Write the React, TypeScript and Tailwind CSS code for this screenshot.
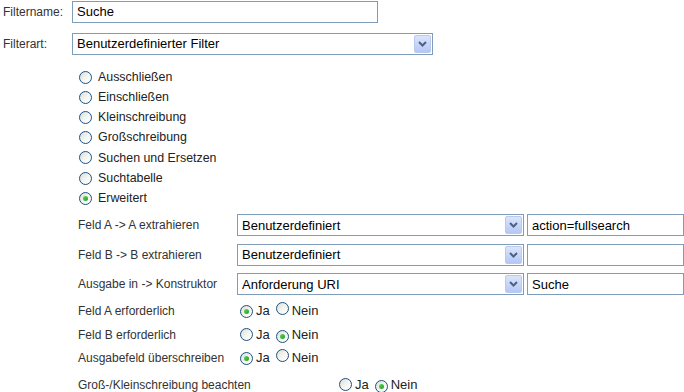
import React from "react";

const font = { fontFamily: '"Liberation Sans", Arial, sans-serif' };

function Radio({ checked }: { checked?: boolean }) {
  return (
    <span className="relative inline-flex h-[13px] w-[13px] shrink-0 items-center justify-center rounded-full border border-[#1c5180] bg-gradient-to-br from-[#dcdcd7] via-[#f4f4f0] to-white">
      {checked && (
        <span className="h-[5px] w-[5px] rounded-full bg-gradient-to-br from-[#5cd85c] to-[#1f9d1f]" />
      )}
    </span>
  );
}

function Chevron() {
  return (
    <span className="flex h-[18px] w-[17px] items-center justify-center rounded-[2px] border border-[#b9c9ef] bg-gradient-to-b from-[#dbe5fb] to-[#b4c8f6]">
      <svg width="9" height="6" viewBox="0 0 9 6">
        <path d="M1 1 L4.5 4.5 L8 1" stroke="#4d6185" strokeWidth="2" fill="none" />
      </svg>
    </span>
  );
}

function Select({ value, w }: { value: string; w: string }) {
  return (
    <div className={`flex h-[22px] items-center justify-between border border-[#7f9db9] bg-white pl-[4px] pr-[1px] text-[13px] text-black ${w}`}>
      <span>{value}</span>
      <Chevron />
    </div>
  );
}

function TextBox({ value, w }: { value: string; w: string }) {
  return (
    <div className={`flex h-[22px] items-center border border-[#7f9db9] bg-white pl-[4px] text-[13px] text-black ${w}`}>
      {value}
    </div>
  );
}

function JaNein({ ja }: { ja: boolean }) {
  return (
    <div className="flex items-center text-[13px] text-[#222]">
      <Radio checked={ja} />
      <span className="ml-[3px]">Ja</span>
      <span className="ml-[6px]"><Radio checked={!ja} /></span>
      <span className="ml-[3px]">Nein</span>
    </div>
  );
}

export default function App() {
  const radios = [
    "Ausschließen",
    "Einschließen",
    "Kleinschreibung",
    "Großschreibung",
    "Suchen und Ersetzen",
    "Suchtabelle",
    "Erweitert",
  ];
  return (
    <div className="h-[392px] w-[684px] overflow-hidden bg-white text-[12px] text-[#333]" style={font}>
      <div className="flex items-center pl-[3px] pt-[1px]">
        <span className="w-[69px]">Filtername:</span>
        <TextBox value="Suche" w="w-[306px]" />
      </div>
      <div className="mt-[10px] flex items-center pl-[3px]">
        <span className="w-[69px]">Filterart:</span>
        <Select value="Benutzerdefinierter Filter" w="w-[361px]" />
      </div>
      <div className="ml-[79px] mt-[12px] flex flex-col">
        {radios.map((r, i) => (
          <div key={r} className="flex h-[20.2px] items-center">
            <Radio checked={i === 6} />
            <span className="ml-[6px] text-[12.4px] text-[#222]">{r}</span>
          </div>
        ))}
      </div>
      <div className="ml-[78px] mt-[6px] flex flex-col gap-[7.5px]">
        {[
          ["Feld A -> A extrahieren", "Benutzerdefiniert", "action=fullsearch"],
          ["Feld B -> B extrahieren", "Benutzerdefiniert", ""],
          ["Ausgabe in -> Konstruktor", "Anforderung URI", "Suche"],
        ].map(([l, s, t]) => (
          <div key={l} className="flex items-center">
            <span className="w-[159px]">{l}</span>
            <Select value={s} w="w-[287px]" />
            <span className="ml-[3px]"><TextBox value={t} w="w-[157px]" /></span>
          </div>
        ))}
      </div>
      <div className="ml-[78px] mt-[4px] flex flex-col">
        {[
          ["Feld A erforderlich", true],
          ["Feld B erforderlich", false],
          ["Ausgabefeld überschreiben", true],
        ].map(([l, j]) => (
          <div key={l as string} className="flex h-[23.5px] items-center">
            <span className="w-[162px]">{l as string}</span>
            <JaNein ja={j as boolean} />
          </div>
        ))}
        <div className="mt-[3px] flex h-[24px] items-center">
          <span className="w-[261px]">Groß-/Kleinschreibung beachten</span>
          <JaNein ja={false} />
        </div>
      </div>
    </div>
  );
}
